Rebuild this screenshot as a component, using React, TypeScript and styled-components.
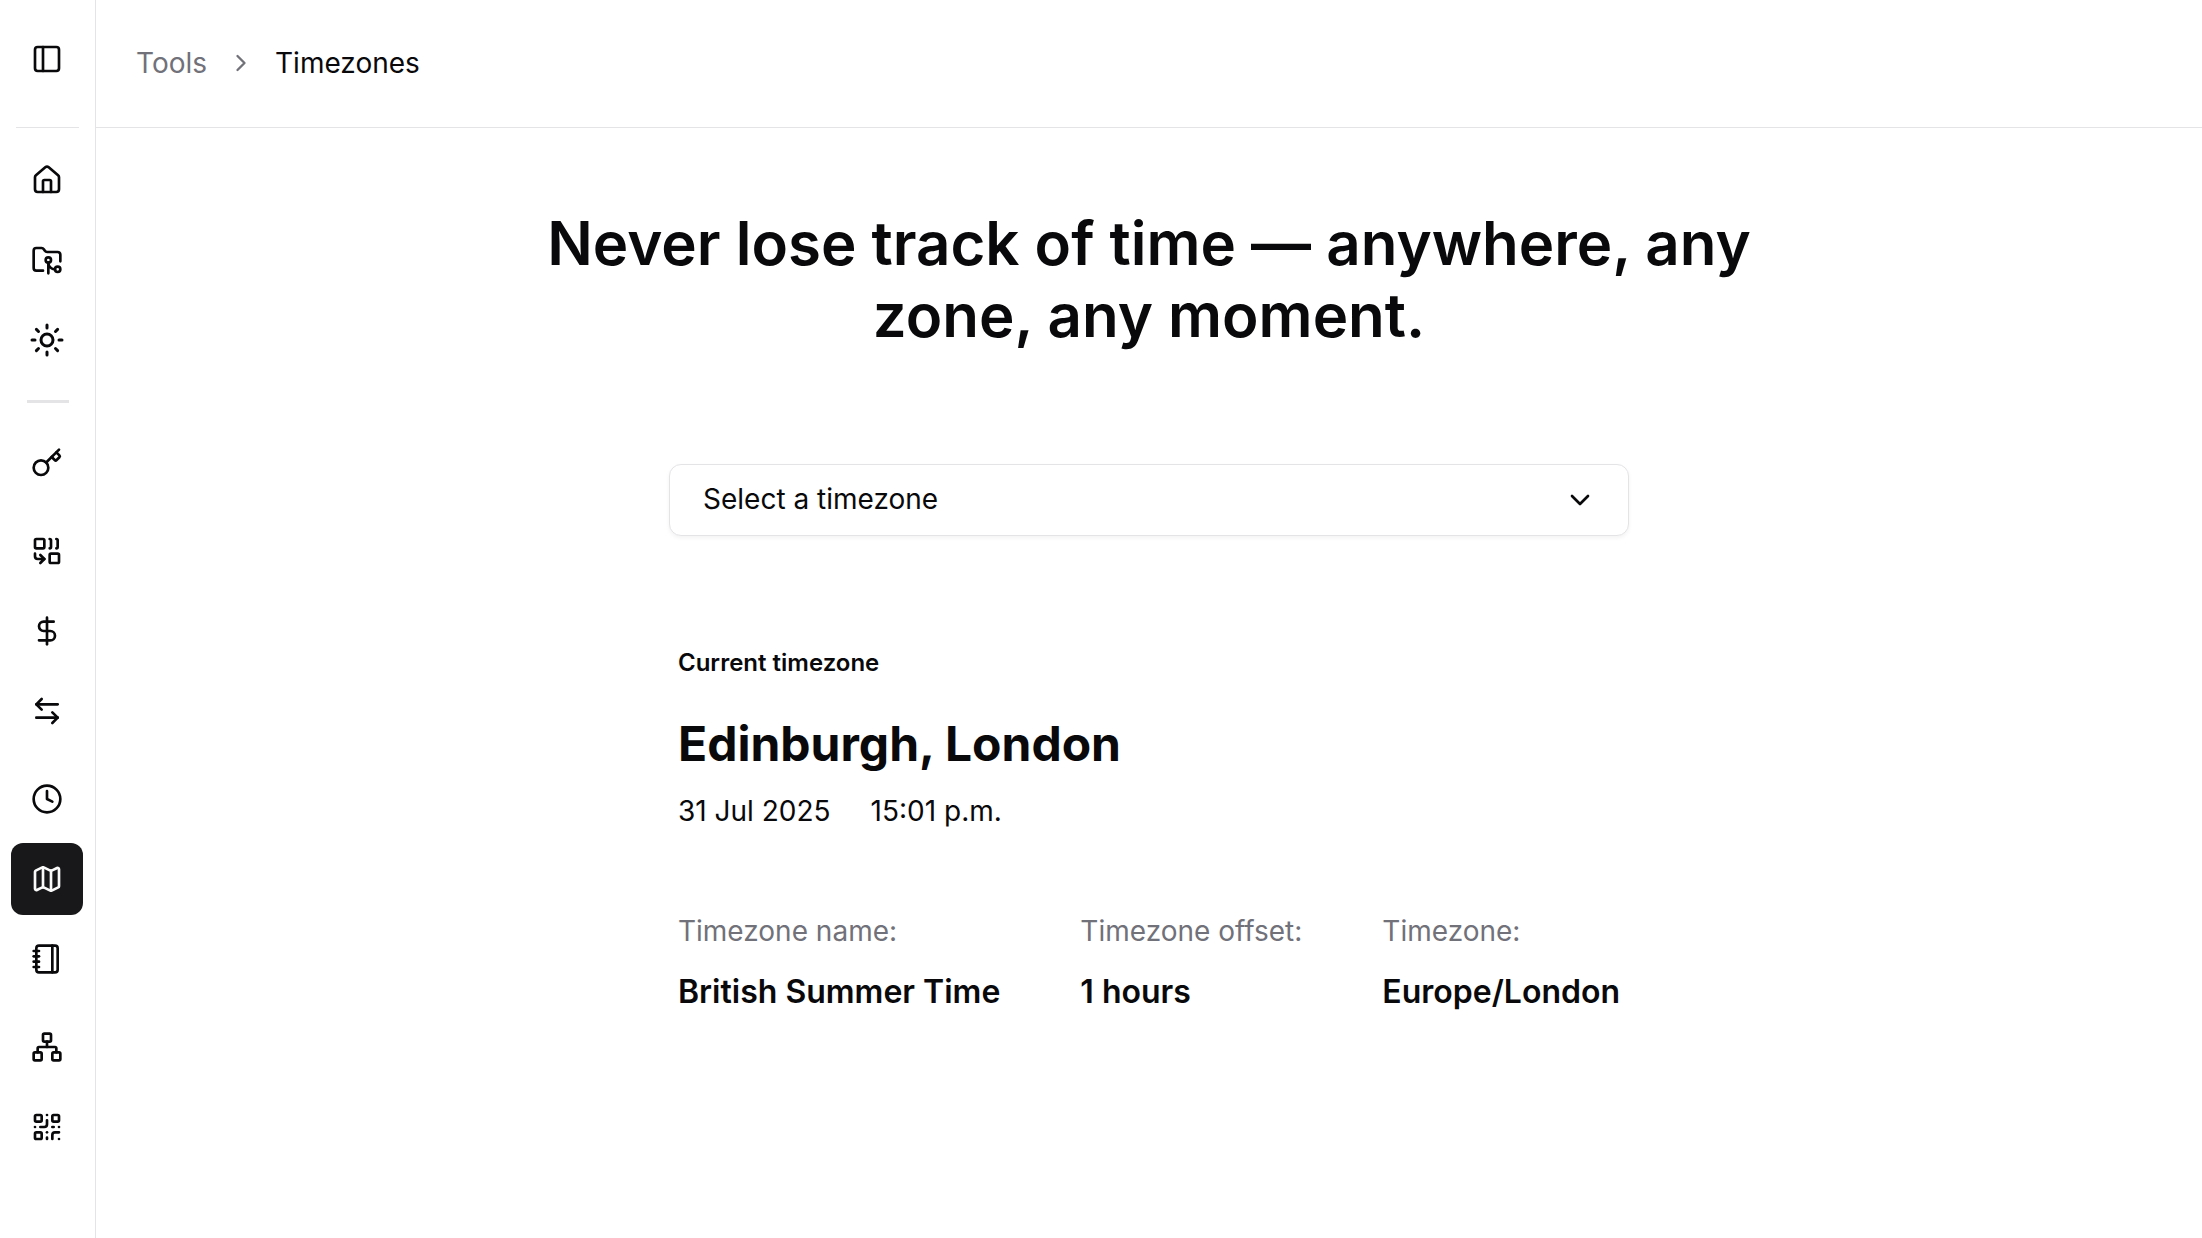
import React, { useState } from 'react';
import styled, { createGlobalStyle } from 'styled-components';
import {
  ArrowLeftRight,
  ChevronDown,
  ChevronRight,
  Clock,
  Combine,
  DollarSign,
  FolderGit2,
  House,
  Key,
  Map as MapIcon,
  Network,
  Notebook,
  PanelLeft,
  QrCode,
  Sun,
  type LucideIcon,
} from 'lucide-react';

const color = {
  text: '#09090b',
  muted: '#71717a',
  border: '#e4e4e7',
  active: '#18181b',
  onActive: '#fafafa',
};

const GlobalStyle = createGlobalStyle`
  *, *::before, *::after { box-sizing: border-box; }
  body {
    margin: 0;
    background: #ffffff;
    color: ${color.text};
    font-family: Inter, "Liberation Sans", sans-serif;
    font-size: 28px;
    line-height: 40px;
  }
  h1, h2, p, dl, dd, ol, ul { margin: 0; padding: 0; }
`;

const Shell = styled.div`
  display: flex;
  min-height: 100vh;
`;

const Sidebar = styled.aside`
  flex: none;
  width: 96px;
  border-right: 1px solid ${color.border};
`;

const SidebarHeader = styled.div`
  display: flex;
  justify-content: center;
  align-items: center;
  height: 128px;
  margin: 0 16px;
  padding: 0 1px 10px 0;
  border-bottom: 1px solid ${color.border};
`;

const ToggleButton = styled.button`
  display: flex;
  flex: none;
  align-items: center;
  justify-content: center;
  width: 72px;
  height: 72px;
  padding: 0;
  border: 0;
  border-radius: 12px;
  background: transparent;
  color: inherit;
  cursor: pointer;
`;

const NavSection = styled.nav`
  display: flex;
  flex-direction: column;
  align-items: flex-start;
  gap: 16px;
  padding: 16px 0 0 11px;
`;

const NavGroup = styled.ul`
  display: flex;
  flex-direction: column;
  gap: 8px;
  list-style: none;
`;

const NavLink = styled.a<{ $active: boolean }>`
  display: flex;
  align-items: center;
  justify-content: center;
  width: 72px;
  height: 72px;
  border-radius: 12px;
  background: ${(p) => (p.$active ? color.active : 'transparent')};
  color: ${(p) => (p.$active ? color.onActive : color.text)};
`;

const Divider = styled.hr`
  width: 42px;
  height: 3px;
  margin: 24px auto 8px;
  border: 0;
  background: ${color.border};
`;

const Main = styled.div`
  flex: 1;
  min-width: 0;
`;

const TopBar = styled.header`
  display: flex;
  align-items: center;
  height: 128px;
  padding: 0 40px 1px;
  border-bottom: 1px solid ${color.border};
`;

const Crumbs = styled.ol`
  display: flex;
  align-items: center;
  gap: 20px;
  list-style: none;
`;

const Crumb = styled.li`
  display: flex;
  align-items: center;
  color: ${color.muted};

  a { color: inherit; text-decoration: none; }
  &[aria-current] { color: ${color.text}; }
`;

const Content = styled.main`
  display: flex;
  flex-direction: column;
  align-items: center;
  padding: 79px 40px;
`;

const Title = styled.h1`
  max-width: 1280px;
  font-size: 60px;
  line-height: 72px;
  font-weight: 600;
  text-align: center;
`;

const SelectField = styled.div`
  display: grid;
  align-items: center;
  width: 100%;
  max-width: 960px;
  margin-top: 113px;

  > * { grid-area: 1 / 1; }
  > svg { justify-self: end; margin-right: 33px; pointer-events: none; }
`;

const TimezoneSelect = styled.select`
  appearance: none;
  width: 100%;
  height: 72px;
  padding: 0 80px 2px 33px;
  border: 1px solid ${color.border};
  border-radius: 12px;
  background: #ffffff;
  box-shadow: 0 2px 4px rgba(0, 0, 0, 0.05);
  color: inherit;
  font: inherit;
`;

const Details = styled.section`
  margin-top: 111px;
`;

const SectionLabel = styled.p`
  font-size: 24px;
  line-height: 32px;
  font-weight: 600;
`;

const City = styled.h2`
  margin-top: 41px;
  font-size: 48px;
  line-height: 48px;
  font-weight: 700;
`;

const Moment = styled.p`
  display: flex;
  gap: 40px;
  margin-top: 23px;
`;

const Facts = styled.dl`
  display: flex;
  flex-wrap: wrap;
  gap: 80px;
  margin-top: 80px;
`;

const Fact = styled.div`
  dt { color: ${color.muted}; }
  dd { margin-top: 21px; font-size: 32px; font-weight: 600; }
`;

type NavItem = { label: string; icon: LucideIcon; size?: number };

const mainNav: NavItem[] = [
  { label: 'Home', icon: House },
  { label: 'Projects', icon: FolderGit2 },
  { label: 'Theme', icon: Sun, size: 36 },
];

const toolNav: NavItem[][] = [
  [{ label: 'Passwords', icon: Key }],
  [
    { label: 'Units', icon: Combine },
    { label: 'Currency', icon: DollarSign },
    { label: 'Converter', icon: ArrowLeftRight },
  ],
  [
    { label: 'Clock', icon: Clock },
    { label: 'Timezones', icon: MapIcon },
    { label: 'Notes', icon: Notebook },
  ],
  [
    { label: 'Network', icon: Network },
    { label: 'QR code', icon: QrCode },
  ],
];

const facts = [
  { name: 'Timezone name:', value: 'British Summer Time' },
  { name: 'Timezone offset:', value: '1 hours' },
  { name: 'Timezone:', value: 'Europe/London' },
];

function NavList({ items }: { items: NavItem[] }) {
  return (
    <NavGroup>
      {items.map(({ label, icon: Icon, size = 32 }) => {
        const active = label === 'Timezones';
        return (
          <li key={label}>
            <NavLink
              href={`#${label.toLowerCase().replace(' ', '-')}`}
              aria-label={label}
              aria-current={active ? 'page' : undefined}
              $active={active}
            >
              <Icon size={size} />
            </NavLink>
          </li>
        );
      })}
    </NavGroup>
  );
}

export default function App() {
  const [zone, setZone] = useState('');

  return (
    <>
      <GlobalStyle />
      <Shell>
        <Sidebar>
          <SidebarHeader>
            <ToggleButton type="button" aria-label="Toggle sidebar">
              <PanelLeft size={32} />
            </ToggleButton>
          </SidebarHeader>
          <NavSection aria-label="Main">
            <NavList items={mainNav} />
          </NavSection>
          <Divider />
          <NavSection aria-label="Tools">
            {toolNav.map((items) => (
              <NavList key={items[0].label} items={items} />
            ))}
          </NavSection>
        </Sidebar>
        <Main>
          <TopBar>
            <nav aria-label="Breadcrumb">
              <Crumbs>
                <Crumb><a href="#tools">Tools</a></Crumb>
                <Crumb aria-hidden="true"><ChevronRight size={28} /></Crumb>
                <Crumb aria-current="page">Timezones</Crumb>
              </Crumbs>
            </nav>
          </TopBar>
          <Content>
            <Title>Never lose track of time — anywhere, any zone, any moment.</Title>
            <SelectField>
              <TimezoneSelect
                aria-label="Timezone"
                value={zone}
                onChange={(e) => setZone(e.target.value)}
              >
                <option value="">Select a timezone</option>
                <option value="Europe/London">Edinburgh, London</option>
              </TimezoneSelect>
              <ChevronDown size={32} aria-hidden="true" />
            </SelectField>
            <Details>
              <SectionLabel>Current timezone</SectionLabel>
              <City>Edinburgh, London</City>
              <Moment>
                <span>31 Jul 2025</span>
                <span>15:01 p.m.</span>
              </Moment>
              <Facts>
                {facts.map((fact) => (
                  <Fact key={fact.name}>
                    <dt>{fact.name}</dt>
                    <dd>{fact.value}</dd>
                  </Fact>
                ))}
              </Facts>
            </Details>
          </Content>
        </Main>
      </Shell>
    </>
  );
}
